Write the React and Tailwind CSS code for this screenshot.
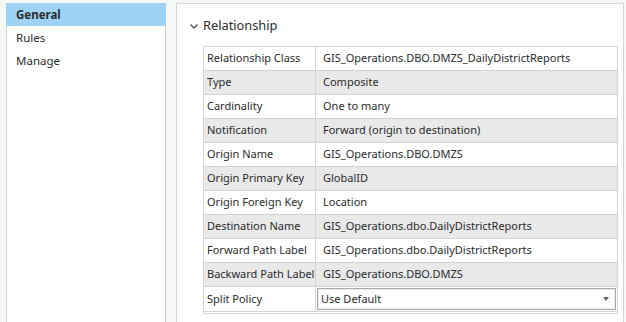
const rows = [
  ['Relationship Class', 'GIS_Operations.DBO.DMZS_DailyDistrictReports'],
  ['Type', 'Composite'],
  ['Cardinality', 'One to many'],
  ['Notification', 'Forward (origin to destination)'],
  ['Origin Name', 'GIS_Operations.DBO.DMZS'],
  ['Origin Primary Key', 'GlobalID'],
  ['Origin Foreign Key', 'Location'],
  ['Destination Name', 'GIS_Operations.dbo.DailyDistrictReports'],
  ['Forward Path Label', 'GIS_Operations.dbo.DailyDistrictReports'],
  ['Backward Path Label', 'GIS_Operations.DBO.DMZS'],
];

const navItems = ['General', 'Rules', 'Manage'];

export default function App() {
  return (
    <div
      className="w-[626px] h-[322px] overflow-hidden bg-[#f6f7f7] flex gap-[10px] pt-[3px] pl-[6px] text-[#2b2b2b] text-[11px]"
      style={{ fontFamily: '"Noto Sans", "Open Sans", sans-serif' }}
    >
      {/* left nav */}
      <div className="w-[160px] h-[330px] shrink-0 bg-white border border-t-0 border-[#cfcfcf] text-[11.5px]">
        {navItems.map((item, i) => (
          <div
            key={item}
            className={
              i === 0
                ? 'h-[23px] flex items-center bg-[#9fd3f5] font-bold -mx-px pl-[10px]'
                : 'h-[23px] pl-[9px] flex items-center'
            }
          >
            {item}
          </div>
        ))}
      </div>

      {/* right panel */}
      <div className="w-[448px] h-[330px] shrink-0 bg-white border border-[#d6d6d6] pl-[26px] pr-[6px]">
        <div className="h-[42px] flex items-center -ml-[14px] pt-[1px]">
          <svg width="10" height="8" viewBox="0 0 10 8" className="mr-[4px] mt-[1px]">
            <path d="M1.5 2.5 L5 6 L8.5 2.5" fill="none" stroke="#555" strokeWidth="1.4" />
          </svg>
          <span className="text-[12.8px]">Relationship</span>
        </div>

        <div className="w-[415px] border border-[#d4d4d4] pb-px">
          {rows.map(([label, value], i) => (
            <div
              key={label}
              className={
                i % 2 === 1
                  ? 'h-[24px] flex border-b border-[#d4d4d4] bg-[#e9e9e9]'
                  : 'h-[24px] flex border-b border-[#d4d4d4] bg-white'
              }
            >
              <div className="w-[112px] shrink-0 border-r border-[#d4d4d4] pl-[3px] flex items-center whitespace-nowrap">
                {label}
              </div>
              <div className="flex-1 pl-[7px] flex items-center whitespace-nowrap">{value}</div>
            </div>
          ))}
          <div className="h-[25px] flex border-b border-[#d4d4d4] bg-white">
            <div className="w-[112px] shrink-0 border-r border-[#d4d4d4] pl-[3px] flex items-center">
              Split Policy
            </div>
            <div className="flex-1 p-px">
              <div className="h-[22px] border border-[#a9a9a9] shadow-[inset_0_0_0_1px_#ececec] flex items-center justify-between pl-[3px] pr-[6px]">
                <span>Use Default</span>
                <svg width="6" height="4" viewBox="0 0 6 4">
                  <path d="M0 0 L6 0 L3 4 Z" fill="#666" />
                </svg>
              </div>
            </div>
          </div>
        </div>
      </div>
    </div>
  );
}
